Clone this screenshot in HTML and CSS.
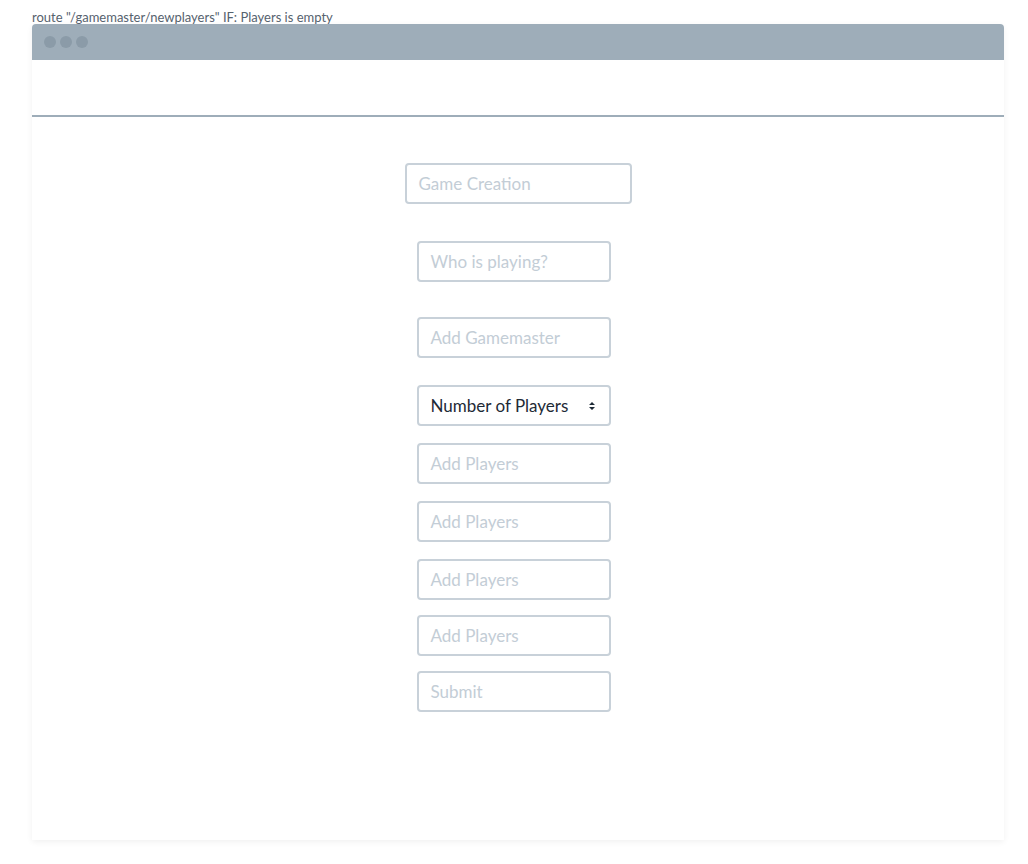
FILE: index.html
```html
<!DOCTYPE html>
<html>
<head>
<meta charset="utf-8">
<link rel="stylesheet" href="styles.css">
</head>
<body>
<div class="route">route "/gamemaster/newplayers" IF: Players is empty</div>
<div class="window">
  <div class="titlebar">
    <span class="dot"></span><span class="dot"></span><span class="dot"></span>
  </div>
  <div class="header"></div>
  <div class="content">
    <div class="form">
      <div class="field wide g1">Game Creation</div>
      <div class="field g2">Who is playing?</div>
      <div class="field g3">Add Gamemaster</div>
      <div class="field select g4">Number of Players
        <svg class="arrows" width="8" height="10" viewBox="0 0 8 10"><path d="M1 4 L4 1 L7 4 Z M1 6 L4 9 L7 6 Z" fill="#1e2a36"/></svg>
      </div>
      <div class="field g5">Add Players</div>
      <div class="field g5">Add Players</div>
      <div class="field g6">Add Players</div>
      <div class="field g6">Add Players</div>
      <div class="field">Submit</div>
    </div>
  </div>
</div>
</body>
</html>
```

FILE: styles.css
```css
html, body {
  margin: 0;
  padding: 0;
  background: #ffffff;
}
body {
  font-family: Lato, "Open Sans", "Liberation Sans", sans-serif;
  width: 1028px;
  height: 864px;
  overflow: hidden;
}
.route {
  font-size: 13px;
  color: #56626e;
  line-height: 14px;
  padding: 10px 0 0 32px;
  height: 14px;
}
.window {
  margin-left: 32px;
  width: 972px;
  height: 816px;
  background: #fff;
  border-radius: 4px 4px 0 0;
  box-shadow: 0 2px 6px rgba(0,0,0,0.06);
  display: flex;
  flex-direction: column;
}
.titlebar {
  height: 36px;
  background: #9eadb9;
  border-radius: 4px 4px 0 0;
  display: flex;
  align-items: center;
  gap: 4px;
  padding-left: 12px;
}
.dot {
  width: 12px;
  height: 12px;
  border-radius: 50%;
  background: #8b9ba8;
}
.header {
  height: 55px;
  border-bottom: 2px solid #9eadb9;
}
.content {
  display: flex;
  justify-content: center;
  padding-top: 46px;
}
.form {
  width: 227px;
  display: flex;
  flex-direction: column;
}
.field {
  box-sizing: border-box;
  height: 41px;
  width: 194px;
  margin-left: 12px;
  border: 2px solid #c8d1d9;
  border-radius: 4px;
  padding: 0 12px;
  display: flex;
  align-items: center;
  font-size: 17px;
  color: #c3cdd6;
}
.field.wide {
  width: 227px;
  margin-left: 0;
}
.select {
  color: #1e2a36;
  justify-content: space-between;
}
.arrows {
  margin-right: 1px;
}
.g1 { margin-bottom: 37px; }
.g2 { margin-bottom: 35px; }
.g3 { margin-bottom: 27px; }
.g4 { margin-bottom: 17px; }
.g5 { margin-bottom: 17px; }
.g6 { margin-bottom: 15px; }
```
